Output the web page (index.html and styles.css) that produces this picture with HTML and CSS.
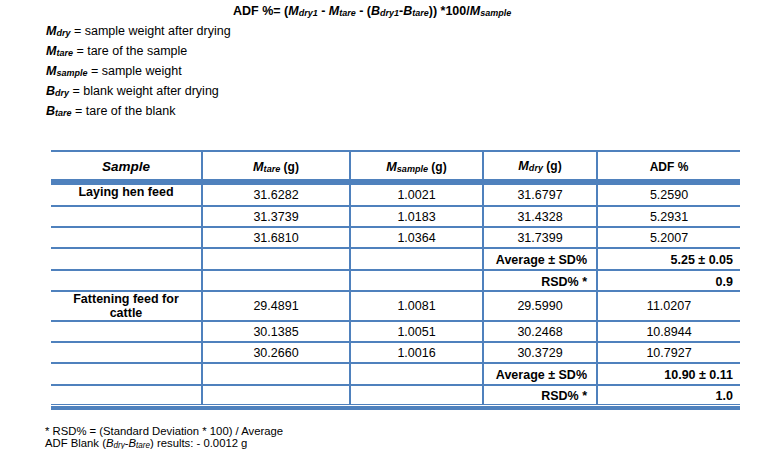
FILE: index.html
```html
<!DOCTYPE html>
<html lang="en">
<head>
<meta charset="utf-8">
<title>ADF results</title>
<link rel="stylesheet" href="styles.css">
</head>
<body>
<div class="page">
  <p class="formula">ADF %= (<i>M<sub>dry1</sub></i> - <i>M<sub>tare</sub></i> - (<i>B<sub>dry1</sub></i>-<i>B<sub>tare</sub></i>)) *100/<i>M<sub>sample</sub></i></p>
  <ul class="defs">
    <li><i class="sym">M<sub>dry</sub></i> = sample weight after drying</li>
    <li><i class="sym">M<sub>tare</sub></i> = tare of the sample</li>
    <li><i class="sym">M<sub>sample</sub></i> = sample weight</li>
    <li><i class="sym">B<sub>dry</sub></i> = blank weight after drying</li>
    <li><i class="sym">B<sub>tare</sub></i> = tare of the blank</li>
  </ul>

  <table class="results">
    <thead>
      <tr class="r-head">
        <th class="c1 sample-h">Sample</th>
        <th class="c2"><i>M<sub>tare</sub></i> (g)</th>
        <th class="c3"><i>M<sub>sample</sub></i> (g)</th>
        <th class="c4 raised"><i>M<sub>dry</sub></i> (g)</th>
        <th class="c5">ADF %</th>
      </tr>
    </thead>
    <tbody>
      <tr class="r-first">
        <td class="c1 name">Laying hen feed</td>
        <td class="c2">31.6282</td><td class="c3">1.0021</td><td class="c4">31.6797</td><td class="c5">5.2590</td>
      </tr>
      <tr class="r-std">
        <td class="c1"></td>
        <td class="c2">31.3739</td><td class="c3">1.0183</td><td class="c4">31.4328</td><td class="c5">5.2931</td>
      </tr>
      <tr class="r-std">
        <td class="c1"></td>
        <td class="c2">31.6810</td><td class="c3">1.0364</td><td class="c4">31.7399</td><td class="c5">5.2007</td>
      </tr>
      <tr class="r-avg">
        <td class="c1"></td><td class="c2"></td><td class="c3"></td>
        <td class="c4 lab">Average ± SD%</td><td class="c5 val">5.25 ± 0.05</td>
      </tr>
      <tr class="r-std">
        <td class="c1"></td><td class="c2"></td><td class="c3"></td>
        <td class="c4 lab">RSD% *</td><td class="c5 val">0.9</td>
      </tr>
      <tr class="r-tall">
        <td class="c1 name">Fattening feed for cattle</td>
        <td class="c2">29.4891</td><td class="c3">1.0081</td><td class="c4">29.5990</td><td class="c5">11.0207</td>
      </tr>
      <tr class="r-std">
        <td class="c1"></td>
        <td class="c2">30.1385</td><td class="c3">1.0051</td><td class="c4">30.2468</td><td class="c5">10.8944</td>
      </tr>
      <tr class="r-std">
        <td class="c1"></td>
        <td class="c2">30.2660</td><td class="c3">1.0016</td><td class="c4">30.3729</td><td class="c5">10.7927</td>
      </tr>
      <tr class="r-avg">
        <td class="c1"></td><td class="c2"></td><td class="c3"></td>
        <td class="c4 lab">Average ± SD%</td><td class="c5 val">10.90 ± 0.11</td>
      </tr>
      <tr class="r-last">
        <td class="c1"></td><td class="c2"></td><td class="c3"></td>
        <td class="c4 lab">RSD% *</td><td class="c5 val">1.0</td>
      </tr>
    </tbody>
  </table>
  <div class="table-rule"></div>

  <div class="notes">
    <p>* RSD% = (Standard Deviation * 100) / Average</p>
    <p>ADF Blank (<i>B<sub>dry</sub></i>-<i>B<sub>tare</sub></i>) results: - 0.0012 g</p>
  </div>
</div>
</body>
</html>
```

FILE: styles.css
```css
* { box-sizing: border-box; }

html, body {
  margin: 0;
  padding: 0;
  background: #fff;
}

body {
  font-family: "Liberation Sans", Arial, sans-serif;
  color: #000;
}

.page {
  padding-top: 2px;
}

sub {
  font-size: 0.72em;
  vertical-align: -1px;
  line-height: 0;
}

.formula {
  margin: 0 0 0 233px;
  font-size: 12.5px;
  font-weight: bold;
  line-height: 19px;
}

.defs {
  list-style: none;
  margin: 0;
  padding: 0 0 0 46px;
  font-size: 12.5px;
  line-height: 20px;
}

.sym {
  font-weight: bold;
}

.results {
  margin: 29px 0 0 51px;
  width: 689px;
  table-layout: fixed;
  border-collapse: separate;
  border-spacing: 0;
  border-top: 2px solid #4f81bd;
  font-size: 12.5px;
}

.results th,
.results td {
  padding: 0;
  text-align: center;
  vertical-align: middle;
  line-height: 14px;
  border-left: 2px solid #4f81bd;
}

.results .c1 { border-left: 0; width: 150px; }
.results .c2 { width: 148px; }
.results .c3 { width: 133px; }
.results .c4 { width: 114px; }
.results .c5 { width: 144px; }

.results th {
  font-size: 12px;
  font-weight: bold;
  padding-top: 2px;
}

.results th.raised { padding-top: 0; }

.results th i { font-weight: bold; font-size: 1.05em; }

.results th.sample-h {
  font-size: 13.5px;
  font-style: italic;
}

.r-head { height: 27px; }

.results td { border-top: 2px solid #4f81bd; }

.r-first td { border-top-width: 6px; }
.r-first { height: 26px; }
.r-std { height: 21px; }
.r-avg { height: 22px; }
.r-tall { height: 29px; }
.r-last { height: 21px; }
.r-last td { border-bottom: 1px solid #4f81bd; }

.results td.name {
  font-weight: bold;
  vertical-align: top;
  padding: 0 10px;
}

.results td.lab,
.results td.val {
  font-weight: bold;
  text-align: right;
  padding-top: 2px;
}

.results td.lab { padding-right: 9px; }
.results td.val { padding-right: 7px; }

.table-rule {
  margin: 1px 0 0 51px;
  width: 689px;
  height: 4px;
  background: #4f81bd;
}

.notes {
  margin: 16px 0 0 45px;
  font-size: 11.3px;
  line-height: 11.5px;
}

.notes p { margin: 0; }
```
